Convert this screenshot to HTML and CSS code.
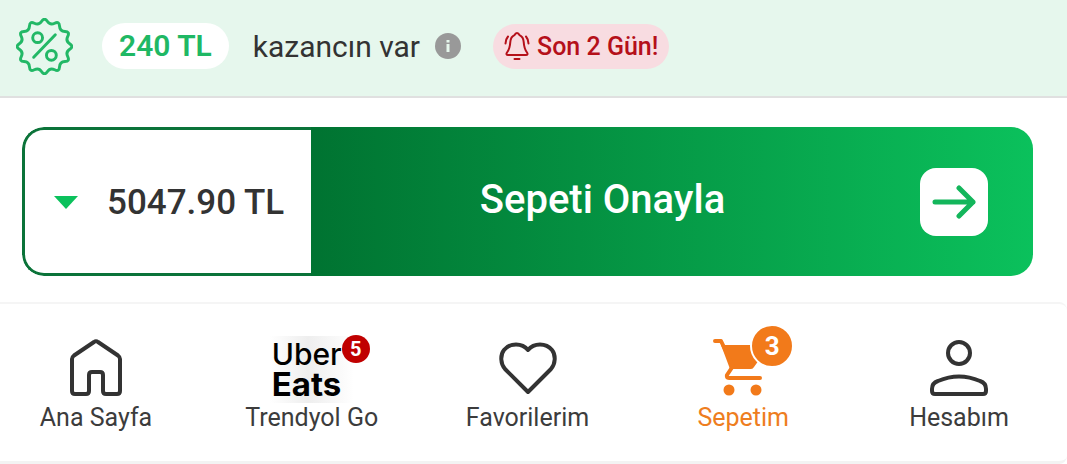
FILE: index.html
```html
<!DOCTYPE html>
<html lang="tr">
<head>
    <meta charset="UTF-8">
    <meta name="viewport" content="width=device-width, initial-scale=1.0">
    <title>Sepetim</title>
    <link rel="stylesheet" href="styles.css">
</head>
<body>
    <div class="saving-bar">
        <svg class="saving-icon" viewBox="-29 -29 58 58">
            <path d="M2.85-25.65Q5.7-21.3 10.35-23.65T15.3-20.8T20.8-15.3T23.65-10.35T25.65-2.85T25.65 2.85T23.65 10.35T20.8 15.3T15.3 20.8T10.35 23.65T2.85 25.65T-2.85 25.65T-10.35 23.65T-15.3 20.8T-20.8 15.3T-23.65 10.35T-25.65 2.85T-25.65-2.85T-23.65-10.35T-20.8-15.3T-15.3-20.8T-10.35-23.65T-2.85-25.65T2.85-25.65Z"/>
            <circle cx="-7" cy="-9" r="5"/>
            <circle cx="7" cy="9" r="5"/>
            <path d="M11-12L-11 11"/>
        </svg>
        <span class="saving-amount">240 TL</span>
        <span class="saving-text">kazancın var</span>
        <button class="info" aria-label="Bilgi">
            <svg viewBox="0 0 26 26">
                <circle cx="13" cy="13" r="13" fill="#999"/>
                <path d="M11.500 11h3v8h-3zM11.500 7h3v2.500h-3z" fill="#e6f7ed"/>
            </svg>
        </button>
        <span class="last-days">
            <svg viewBox="0 0 26 30">
                <path d="M13 2c-1.500 0-2 1-2.500 2.200C7.500 5.500 6.500 8 6.300 11c-.3 5-1 7.500-3.300 10.500-1 1.500-.5 2.500 1 2.500h18c1.500 0 2-1 1-2.500-2.300-3-3-5.500-3.300-10.500-.2-3-1.200-5.500-4.200-6.800C15 3 14.500 2 13 2z"/>
                <path d="M10.500 28h5M4 5.500Q1.500 8.500 1.500 12.500M22 5.500Q24.500 8.500 24.500 12.500"/>
            </svg>
            Son 2 Gün!
        </span>
    </div>

    <div class="checkout">
        <button class="total">
            <svg viewBox="0 0 24 13"><path d="M0 0h24L12 13z"/></svg>
            <span>5047.90 TL</span>
        </button>
        <button class="confirm">
            <span class="confirm-text">Sepeti Onayla</span>
            <span class="confirm-arrow">
                <svg viewBox="0 0 44 36"><path d="M3 18h38M27 4l14 14-14 14"/></svg>
            </span>
        </button>
    </div>

    <nav class="tab-bar">
        <a class="tab" href="#">
            <svg class="tab-icon" viewBox="0 0 60 60">
                <path d="M6 21Q6 19 8 17.500L28 4Q30 2.500 32 4L52 17.500Q54 19 54 21V53Q54 56 51 56H40Q37 56 37 53V37Q37 34 34 34H26Q23 34 23 37V53Q23 56 20 56H9Q6 56 6 53Z"/>
            </svg>
            <span>Ana Sayfa</span>
        </a>
        <a class="tab" href="#">
            <span class="uber">
                <span class="uber-top">Uber</span>
                <span class="uber-bottom">Eats</span>
                <span class="badge badge-red">5</span>
            </span>
            <span>Trendyol Go</span>
        </a>
        <a class="tab" href="#">
            <svg class="tab-icon" viewBox="0 0 60 60">
                <path d="M30 54L7 31C2.500 26 2 17 6 12C12 4.500 24 4.500 30 12C36 4.500 48 4.500 54 12C58 17 57.500 26 53 31Z"/>
            </svg>
            <span>Favorilerim</span>
        </a>
        <a class="tab tab-active" href="#">
            <span class="cart">
                <svg class="tab-icon" viewBox="0 0 60 60">
                    <path class="solid" d="M8 7H46V22L41 29Q40 31 38 31H17Z"/>
                    <path d="M2 3H8L20 28L14 37Q13 40 16 40H47"/>
                    <circle class="solid" cx="16" cy="52" r="5.500"/>
                    <circle class="solid" cx="43" cy="52" r="5.500"/>
                </svg>
                <span class="badge badge-orange">3</span>
            </span>
            <span>Sepetim</span>
        </a>
        <a class="tab" href="#">
            <svg class="tab-icon" viewBox="0 0 60 60">
                <circle cx="30" cy="15" r="11"/>
                <path d="M3 51Q3 45 9 43Q30 34 51 43Q57 45 57 51V53Q57 56 54 56H6Q3 56 3 53Z"/>
            </svg>
            <span>Hesabım</span>
        </a>
    </nav>
</body>
</html>
```
FILE: styles.css
```css
* {
    box-sizing: border-box;
}

body {
    margin: 0;
    font-family: Roboto, "Liberation Sans", sans-serif;
    color: #333;
    background-color: #fff;
}

button {
    padding: 0;
    border: none;
    font: inherit;
    color: inherit;
    background: none;
    cursor: pointer;
}

svg {
    display: block;
    fill: none;
    stroke-linecap: round;
    stroke-linejoin: round;
}

.saving-bar {
    display: flex;
    align-items: center;
    height: 98px;
    padding: 0 16px 4px;
    background-color: #e6f7ed;
    border-bottom: 2px solid #e0e0e0;
}

.saving-icon {
    width: 57px;
    height: 57px;
    stroke: #22b866;
    stroke-width: 3;
}

.saving-amount {
    margin-left: 29px;
    padding: 0 17px;
    line-height: 46px;
    border-radius: 23px;
    font-size: 30px;
    font-weight: 600;
    color: #1fb864;
    background-color: #fff;
}

.saving-text {
    margin-left: 24px;
    font-size: 30px;
}

.info {
    width: 26px;
    height: 26px;
    margin-left: 15px;
}

.last-days {
    display: flex;
    align-items: center;
    gap: 7px;
    margin-left: 32px;
    padding: 0 11px;
    line-height: 45px;
    border-radius: 23px;
    font-size: 25px;
    font-weight: 500;
    color: #b5101a;
    background-color: #f8dce1;
}

.last-days svg {
    width: 26px;
    height: 30px;
    stroke: #b5101a;
    stroke-width: 2;
}

.checkout {
    display: flex;
    height: 149px;
    margin: 29px 34px 26px 22px;
    border-radius: 22px;
    overflow: hidden;
}

.total {
    display: flex;
    align-items: center;
    gap: 29px;
    width: 289px;
    padding: 2px 0 0 29px;
    border: 3px solid #0b7339;
    border-right: none;
    border-radius: 22px 0 0 22px;
    font-size: 35px;
    font-weight: 500;
}

.total svg {
    width: 24px;
    height: 13px;
    fill: #0bc15c;
}

.confirm {
    display: flex;
    flex: 1;
    align-items: center;
    padding-right: 45px;
    color: #fff;
    background: linear-gradient(90deg, #007331, #0bc15c);
}

.confirm-text {
    flex: 1;
    padding: 0 26px 4px 0;
    font-size: 40px;
    font-weight: 500;
}

.confirm-arrow {
    display: flex;
    align-items: center;
    justify-content: center;
    width: 68px;
    height: 68px;
    border-radius: 16px;
    background-color: #fff;
}

.confirm-arrow svg {
    width: 44px;
    height: 36px;
    stroke: #13b65b;
    stroke-width: 5;
}

.tab-bar {
    display: flex;
    justify-content: space-between;
    height: 162px;
    padding: 32px 33px 0 21px;
    border-top: 2px solid #f5f5f5;
    border-bottom: 3px solid #f3f3f3;
    border-radius: 0 8px 8px 0;
}

.tab {
    display: flex;
    flex-direction: column;
    align-items: center;
    width: 150px;
    font-size: 25px;
    line-height: 30px;
    color: #3c3c3c;
    text-decoration: none;
}

.tab-icon {
    width: 66px;
    height: 67px;
    padding: 2px 3px 5px;
    stroke: #333;
    stroke-width: 4;
}

.tab-active {
    color: #ee7d20;
}

.tab-active .tab-icon {
    stroke: #f27a1a;
}

.solid {
    fill: #f27a1a;
    stroke: none;
}

.cart {
    position: relative;
}

.uber {
    position: relative;
    display: flex;
    flex-direction: column;
    width: 84px;
    height: 67px;
    padding: 3px 0 0 2px;
    font-family: Inter, "Liberation Sans", sans-serif;
    line-height: 30px;
    color: #000;
    background: linear-gradient(90deg, #fff, #eee 45%, #fff);
}

.uber-top {
    font-size: 30px;
    font-weight: 500;
}

.uber-bottom {
    font-size: 33px;
    font-weight: 700;
}

.badge {
    position: absolute;
    border-radius: 50%;
    font-family: Roboto, "Liberation Sans", sans-serif;
    font-weight: 700;
    color: #fff;
    text-align: center;
}

.badge-red {
    top: -1px;
    right: -16px;
    width: 28px;
    font-size: 20px;
    line-height: 28px;
    background-color: #c00000;
}

.badge-orange {
    top: -12px;
    right: -18px;
    width: 44px;
    border: 2px solid #fff;
    font-size: 26px;
    line-height: 40px;
    background-color: #f27a1a;
}
```
